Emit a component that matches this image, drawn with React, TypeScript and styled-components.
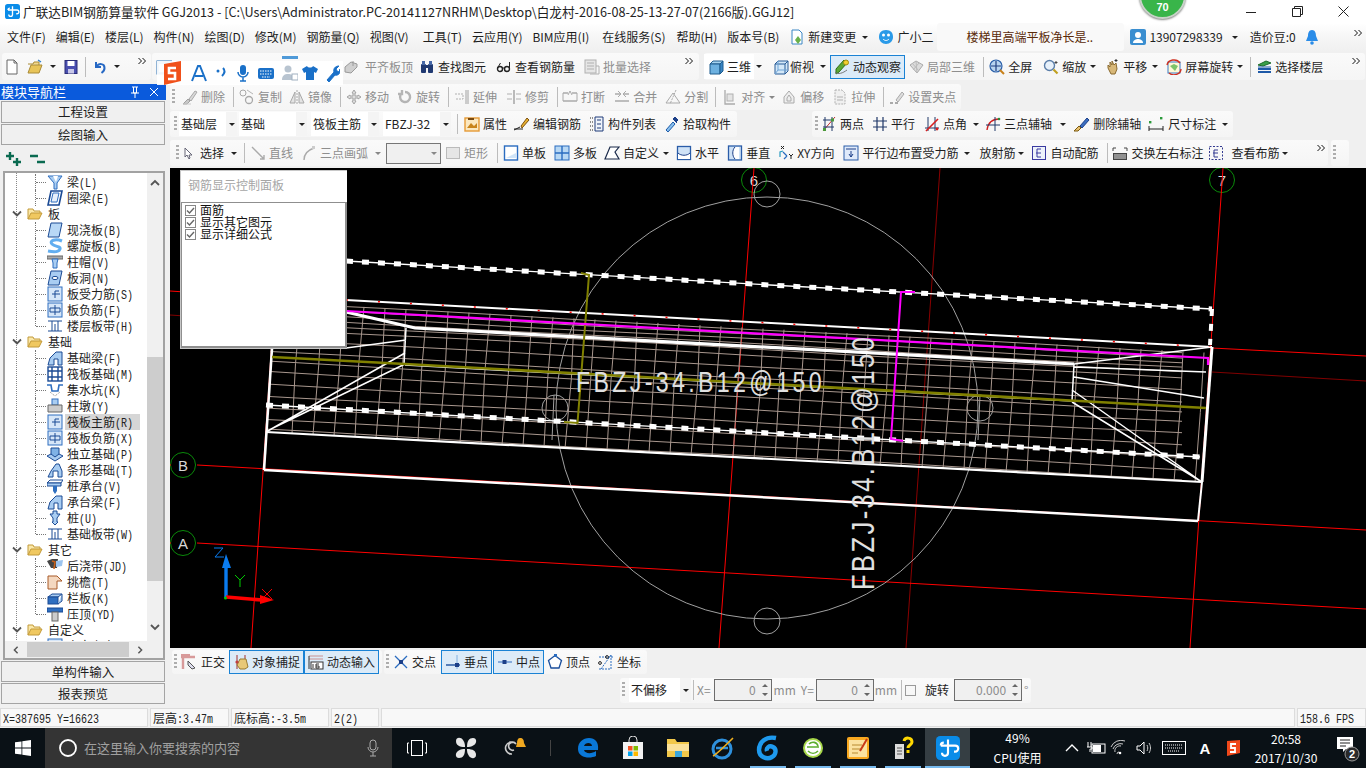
import React from "react";
import styled, { createGlobalStyle } from "styled-components";

const CJK = '"Noto Sans CJK SC","Liberation Sans",sans-serif';

const Global = createGlobalStyle`
  html, body { margin: 0; padding: 0; background: #f0f0f0; overflow: hidden; }
  * { box-sizing: border-box; }
  body { font: 12px/16px ${CJK}; color: #1e1e1e; }
`;

const Frame = styled.div`width:1366px;height:768px;position:relative;overflow:hidden;display:flex;flex-direction:column;background:#f0f0f0;`;
const TitleBar = styled.div`height:23px;background:#fff;display:flex;align-items:center;padding-left:5px;flex:none;`;
const TitleText = styled.div`margin-left:3px;font-size:12.65px;white-space:nowrap;color:#222;`;
const WinBtns = styled.div`margin-left:auto;display:flex;width:138px;height:23px;flex:none;`;
const WinBtn = styled.div`width:46px;display:flex;align-items:center;justify-content:center;`;
const MenuBar = styled.div`height:28px;flex:none;background:linear-gradient(#fff,#f6f6f6 50%,#f0f0f0);display:flex;align-items:center;padding-left:7px;gap:10px;position:relative;`;
const MenuItem = styled.span<{$m?:number}>`flex:none;white-space:nowrap;margin-left:${p=>p.$m??0}px;`;
const Msg = styled.div`width:187px;height:28px;flex:none;margin-left:-6px;background:#f9f9f9;border-radius:3px;color:#5a2a08;padding-left:29px;line-height:28px;white-space:nowrap;`;
const Brand = styled.div<{$m?:number}>`display:flex;align-items:center;gap:3px;flex:none;white-space:nowrap;margin-left:${p=>p.$m??0}px;`;
const TopRow = styled.div`height:33px;flex:none;display:flex;padding-top:2px;align-items:flex-start;`;
const Band = styled.div<{$m?:number;$p?:number;$h?:number}>`display:flex;align-items:center;height:${p=>p.$h?`${p.$h}px`:'auto'};margin-left:${p=>p.$m??0}px;padding-right:${p=>p.$p??5}px;background:linear-gradient(#fafafa,#f5f5f5);border-radius:3px;`;
const Item = styled.div<{$m:number;$on?:boolean;$white?:boolean}>`
  display:flex;align-items:center;flex:none;margin-left:${p=>p.$m}px;white-space:nowrap;
  ${p=>p.$on?'background:#dcebf8;border:1px solid #1a82d4;height:24px;padding:0 3px;':''}
  ${p=>p.$white?'background:#fff;height:25px;padding:0 3px 0 4px;':''}
`;
const IconBox = styled.svg`width:16px;height:16px;flex:none;display:block;`;
const Label = styled.span<{$off?:boolean;$g:number}>`margin-left:${p=>p.$g}px;color:${p=>p.$off?'#8e8e8e':'#1e1e1e'};flex:none;`;
const Caret = styled.i<{$m?:number;$off?:boolean}>`display:block;flex:none;width:0;height:0;margin-left:${p=>p.$m??4}px;border:3px solid transparent;border-bottom:0;border-top:3px solid ${p=>p.$off?'#888':'#222'};`;
const Sep = styled.div<{$m?:number}>`width:1px;height:20px;flex:none;background:#bcbcbc;margin-left:${p=>p.$m??8}px;`;
const Handle = styled.div<{$m?:number}>`width:3px;height:16px;flex:none;margin-left:${p=>p.$m??2}px;background:repeating-linear-gradient(#adadad 0 2px,transparent 2px 4px);`;
const More = styled.svg<{$m?:number}>`width:8px;height:8px;flex:none;margin-left:${p=>p.$m??0}px;align-self:flex-start;margin-top:4px;`;
const Peek = styled.div<{$m:number}>`width:16px;height:3px;flex:none;margin-left:${p=>p.$m}px;align-self:flex-start;margin-top:3px;background:#4f9ad8;`;
const Work = styled.div`flex:none;height:620px;display:flex;`;
const Side = styled.div`width:166px;flex:none;display:flex;flex-direction:column;`;
const SideHead = styled.div`height:16px;flex:none;background:#0a5adc;color:#fff;display:flex;align-items:center;padding:0 5px 0 1px;font-size:13px;justify-content:space-between;`;
const SideBtn = styled.div<{$h:number}>`height:${p=>p.$h}px;margin:1px 1px 0 1px;border:1px solid #a4a4a4;background:#f0f0f0;text-align:center;font-size:12.5px;line-height:${p=>p.$h-2}px;flex:none;`;
const PlusBar = styled.div`height:25px;flex:none;margin:1px 1px 0 3px;display:flex;align-items:center;padding-left:2px;gap:7px;`;
const TreeBox = styled.div`flex:1;min-height:0;margin:0 1px 0 3px;border:2px solid #a2a2a2;display:grid;grid-template-columns:142px 16px;grid-template-rows:1fr 17px;background:#f0f0f0;`;
const TreeList = styled.div`overflow:hidden;background:#fff;padding-top:1px;background-image:repeating-linear-gradient(#888 0 1px,transparent 1px 2px);background-size:1px 100%;background-position:11px 0;background-repeat:no-repeat;`;
const Row = styled.div<{$last?:boolean}>`height:16px;position:relative;display:flex;align-items:center;white-space:nowrap;padding-left:42px;
  &::before{content:"";position:absolute;left:30px;top:0;height:${p=>p.$last?'8px':'16px'};border-left:1px dotted #777;}
  &::after{content:"";position:absolute;left:31px;top:8px;width:10px;border-top:1px dotted #777;}
`;
const RootRow = styled.div`height:16px;display:flex;align-items:center;white-space:nowrap;padding-left:7px;`;
const RootLabel = styled.span`margin-left:5px;`;
const LeafLabel = styled.span<{$sel?:boolean}>`padding:0 2px;margin-left:2px;height:16px;line-height:16px;font-size:12px;flex:none;background:${p=>p.$sel?'#d6d6d6':'transparent'};width:${p=>p.$sel?'75px':'auto'};`;
const Mono = styled.span`display:inline-block;font:10px/16px "Liberation Mono",monospace;transform:scaleY(1.2);color:#222;`;
const VBar = styled.div`background:#f0f0f0;display:flex;flex-direction:column;align-items:center;padding-top:6px;`;
const VThumb = styled.div`width:16px;height:224px;margin-top:170px;background:#cdcdcd;flex:none;`;
const ArrowSvg = styled.svg<{$mt?:number}>`width:10px;height:8px;flex:none;margin-top:${p=>p.$mt??0}px;`;
const HBar = styled.div`background:#f0f0f0;display:flex;align-items:center;padding-left:6px;`;
const HThumb = styled.div`width:102px;height:15px;margin-left:6px;background:#cdcdcd;flex:none;`;
const Corner = styled.div`background:#f0f0f0;`;
const Main = styled.div`flex:1;margin-left:4px;display:flex;flex-direction:column;min-width:0;`;
const ToolRow = styled.div<{$h:number;$t?:number;$a?:string}>`height:${p=>p.$h}px;flex:none;margin-top:${p=>p.$t??0}px;display:flex;align-items:${p=>p.$a??'stretch'};`;
const Combo = styled.div<{$m:number;$w:number}>`width:${p=>p.$w}px;height:24px;margin-left:${p=>p.$m}px;flex:none;display:flex;align-items:stretch;white-space:nowrap;`;
const ComboText = styled.div`flex:1;background:#fff;padding-left:2px;line-height:24px;`;
const ComboBtn = styled.div`width:11px;flex:none;background:#f4f4f4;display:flex;align-items:center;justify-content:center;`;
const BlankBox = styled.div<{$m:number;$w:number}>`width:${p=>p.$w}px;height:21px;margin-left:${p=>p.$m}px;flex:none;border:1px solid #777;background:#f0f0f0;display:flex;align-items:center;justify-content:flex-end;padding-right:3px;`;
const CanvasWrap = styled.div`height:480px;flex:none;position:relative;background:#000;overflow:hidden;`;
const CanvasSvg = styled.svg`width:1196px;height:480px;display:block;`;
const Panel = styled.div`position:absolute;left:10px;top:2px;width:167px;height:179px;background:#fff;border:1px solid #c8c8c8;border-right:0;display:flex;flex-direction:column;`;
const PanelTitle = styled.div`height:31px;flex:none;color:#a6a6a6;padding-left:7px;line-height:28px;`;
const PanelBody = styled.div`flex:1;border:2px solid #8f8f8f;border-width:1px 2px 2px 1px;padding:1px 0 0 3px;`;
const PanelRow = styled.div`height:12px;display:flex;align-items:center;line-height:12px;font-size:12px;gap:4px;color:#111;`;
const Check = styled.svg`width:11px;height:11px;flex:none;`;
const Unit = styled.span<{$m?:number}>`margin-left:${p=>p.$m??2}px;color:#8c8c8c;flex:none;`;
const NumBox = styled.div<{$m?:number;$w:number}>`width:${p=>p.$w}px;height:22px;margin-left:${p=>p.$m??2}px;flex:none;border:1px solid #6c6c6c;background:#f0f0f0;color:#8c8c8c;display:flex;align-items:center;justify-content:flex-end;gap:5px;padding-right:2px;`;
const Spin = styled.svg`width:8px;height:16px;flex:none;`;
const Tick = styled.div<{$m:number}>`width:11px;height:11px;margin-left:${p=>p.$m}px;border:1px solid #9a9a9a;flex:none;`;
const StatusBar = styled.div`height:24px;flex:none;display:flex;gap:2px;padding:4px 0 0 0;`;
const Cell = styled.div<{$w:number}>`width:${p=>p.$w}px;flex:${p=>p.$w?'none':'1'};border:1px solid #dcdcdc;background:#f8f8f8;height:19px;padding-left:2px;line-height:17px;white-space:nowrap;`;
const Taskbar = styled.div`height:40px;flex:none;background:#0a1116;display:flex;align-items:center;color:#fff;`;
const StartBtn = styled.div`width:45px;height:40px;display:flex;align-items:center;justify-content:center;flex:none;`;
const Search = styled.div`width:347px;height:40px;background:#343434;display:flex;align-items:center;color:#a0a0a0;padding-left:13px;flex:none;font-size:13px;`;
const SearchText = styled.span`margin-left:6px;flex:1;`;
const Slot = styled.div<{$w?:number;$u?:boolean;$act?:boolean}>`width:${p=>p.$w??45}px;height:40px;flex:none;display:flex;align-items:center;justify-content:center;position:relative;background:${p=>p.$act?'#353e43':'transparent'};
  ${p=>p.$u?`&::after{content:"";position:absolute;left:${p.$act?0:5}px;right:${p.$act?0:4}px;bottom:0;height:2px;background:#76b9ed;}`:''}
`;
const TaskDiv = styled.div`width:1px;height:16px;background:#444;margin:0 14px 0 9px;flex:none;`;
const Cpu = styled.div`width:85px;flex:none;text-align:center;font-size:12px;line-height:20px;color:#fff;margin-left:5px;`;
const Tray = styled.div`display:flex;align-items:center;flex:none;`;
const TrayA = styled.span`width:26px;text-align:center;font:bold 15px "Liberation Sans",sans-serif;`;
const Clock = styled.div`width:84px;flex:none;text-align:center;font-size:12px;line-height:19px;margin-left:2px;`;
const Sogou = styled.div`position:absolute;left:157px;top:61px;width:186px;height:24px;background:rgba(255,255,255,.93);display:flex;align-items:center;padding-left:5px;`;
const SogouIcon = styled.svg<{$m:number}>`width:16px;height:18px;flex:none;margin-left:${p=>p.$m}px;`;
const Badge = styled.div`position:absolute;left:1139px;top:-28px;width:47px;height:47px;border-radius:50%;background:#39b54a;border:2px solid #c9d2c9;color:#fff;font:bold 11px "Liberation Sans",sans-serif;display:flex;align-items:flex-end;justify-content:center;padding-bottom:4px;box-shadow:0 1px 2px #888;`;

const Ic: Record<string, React.ReactNode> = {
  new: <path d="M3 1h7l3 3v11H3z M10 1v3h3" fill="#fff" stroke="#666"/>,
  open: <><path d="M1 5h5l1-2h5v3" fill="#f4d98a" stroke="#a98b38"/><path d="M1 14l3-8h11l-3 8z" fill="#e8c458" stroke="#a98b38"/><path d="M11 1l3 2" stroke="#2a7fd0" strokeWidth="1.4"/></>,
  save: <><rect x="2" y="1.500" width="12" height="13" fill="#4a4fb0" stroke="#2a2d77"/><rect x="4.500" y="2" width="7" height="5" fill="#fff"/><rect x="5" y="10" width="6" height="4.500" fill="#c8c8e8"/></>,
  undo: <path d="M4 3v5h5M4.500 8c2-4 8-4 8 1 0 2-1.500 4-3 5" fill="none" stroke="#2668c4" strokeWidth="2"/>,
  hidden: <><rect x="1" y="2" width="15" height="13" fill="#4f9ad8" stroke="#2a70b4"/><rect x="3" y="5" width="11" height="8" fill="#dcecf8"/></>,
  flat: <><path d="M2 8l6-5 6 2v3l-6 6-6-1z" fill="#cfcfcf" stroke="#9a9a9a"/><path d="M10 2v5" stroke="#9a9a9a"/></>,
  find: <><rect x="2" y="5" width="5" height="9" rx="1" fill="#213a72"/><rect x="9" y="5" width="5" height="9" rx="1" fill="#213a72"/><rect x="3" y="2" width="3" height="4" fill="#4668a8"/><rect x="10" y="2" width="3" height="4" fill="#4668a8"/><rect x="6" y="6" width="4" height="3" fill="#213a72"/></>,
  glasses: <><circle cx="4" cy="10" r="2.500" fill="none" stroke="#222" strokeWidth="1.400"/><circle cx="11" cy="10" r="2.500" fill="none" stroke="#222" strokeWidth="1.400"/><path d="M6.500 9h2M1.500 9l3-5M13.500 9V3" stroke="#222" fill="none"/></>,
  batch: <><rect x="1" y="1" width="11" height="13" fill="#e6e6e6" stroke="#b0b0b0"/><path d="M3 4h7M3 7h7M3 10h7" stroke="#b0b0b0"/><path d="M12 7h3v8H6" stroke="#b0b0b0" fill="none"/></>,
  cube: <><path d="M2 5l3-3h10l-3 3z" fill="#a6d4f0" stroke="#1f5c8e"/><path d="M2 5h10v10H2z" fill="#6db1e0" stroke="#1f5c8e"/><path d="M12 5l3-3v10l-3 3z" fill="#3a86c4" stroke="#1f5c8e"/></>,
  wire: <><path d="M2 5l3-3h10v10l-3 3H2z" fill="#d4e8f8" stroke="#275a96"/><path d="M2 5h10v10M12 5l3-3" fill="none" stroke="#275a96"/><path d="M5 2v9l-3 4M5 11h9" fill="none" stroke="#6ea5d8"/></>,
  orbit: <><path d="M2 15l3-2 8-9-3-3-8 9z" fill="#5da835" stroke="#2f6e14"/><circle cx="12" cy="3.500" r="2.500" fill="#f2d030" stroke="#a08a10"/><path d="M1 13c3 3 8 1 12-2" fill="none" stroke="#777"/></>,
  local: <><path d="M2 6l6-4 7 4-6 8z" fill="#dcdcdc" stroke="#aaa"/><path d="M8 2l1 12M4 4l7 8M11 4l-6 7" stroke="#bbb"/></>,
  full: <><circle cx="7" cy="7" r="6" fill="#b8d4f0" stroke="#2a5fa8" strokeWidth="1.200"/><path d="M7 2v10M2 7h10" stroke="#203f80" strokeWidth="1.200"/><path d="M11 11l4 4" stroke="#c8801a" strokeWidth="2"/></>,
  zoom: <><circle cx="6.500" cy="6.500" r="5" fill="#e6f0fa" stroke="#5a7da8" strokeWidth="1.400"/><path d="M10.500 10.500l4 4" stroke="#c0a020" strokeWidth="2.200"/><path d="M13 2v3M11.500 3.500h3" stroke="#444"/></>,
  pan: <><path d="M4 9V6l2 2V3l2 3V2l2 4 2-2 1 6-2 5H7z" fill="#d8b878" stroke="#8a6a30"/><path d="M12 0v3M10.500 1.500h3" stroke="#333"/></>,
  rotate: <><rect x="2" y="3" width="12" height="11" fill="#fff8d8" stroke="#3a7ac4"/><path d="M4 7l4-2 4 2-3 5z" fill="#7cc46a"/><path d="M1 6a7 6 0 0 1 13-2M15 10a7 6 0 0 1-12 4" fill="none" stroke="#d03020" strokeWidth="1.400"/></>,
  floors: <><path d="M2 6l8-4 5 2-8 3z" fill="#3aa04a" stroke="#1e6a2a"/><path d="M2 10h13M2 13h13" stroke="#1f5aa8" strokeWidth="1.800"/><path d="M2 8h13" stroke="#1f5aa8"/></>,
  del: <><path d="M1 15l5-5 2 2-3 3z" fill="#c8c8c8" stroke="#a0a0a0"/><path d="M7 10l6-8 2 1-6 9z" fill="#d8d8d8" stroke="#a8a8a8"/><path d="M1 15h8" stroke="#ccc"/></>,
  copy: <><circle cx="4" cy="4" r="3" fill="none" stroke="#a8a8a8"/><circle cx="10" cy="11" r="3.500" fill="none" stroke="#a8a8a8" strokeWidth="1.300"/><path d="M8 1l6 4" stroke="#b4b4b4"/></>,
  mirror: <><path d="M1 14l5-11v11zM15 14l-5-11v11z" fill="#e4e4e4" stroke="#a8a8a8"/><path d="M8 1v14" stroke="#a8a8a8" strokeDasharray="2 1"/></>,
  move: <path d="M8 1l2 3H9v3h3V6l3 2-3 2V9H9v3h1l-2 3-2-3h1V9H4v1L1 8l3-2v1h3V4H6z" fill="#dedede" stroke="#a4a4a4"/>,
  rot: <path d="M8 3a5 5 0 1 1-4.500 3M5 1v4H1" fill="none" stroke="#b4b4b4" strokeWidth="2.400"/>,
  extend: <><path d="M1 5h8v5H1" fill="none" stroke="#b0b0b0" strokeDasharray="2 1"/><path d="M12 1v14M14 1v14" stroke="#a0a0a0"/></>,
  trim: <><path d="M1 5h5M10 5h5M1 10h5M10 10h5" stroke="#b0b0b0"/><path d="M8 1v14" stroke="#a0a0a0" strokeWidth="1.400"/></>,
  brk: <><path d="M1 4h5M10 4h5M1 12h14" stroke="#aaa" strokeWidth="1.300"/><path d="M1 4v8M15 4v8M8 2l-2 4M8 2l2 4" stroke="#aaa" fill="none"/></>,
  merge: <><path d="M1 5h5M10 5h5M1 12h14" stroke="#aaa" strokeWidth="1.300"/><path d="M4 2l3 3-3 3M12 2L9 5l3 3" stroke="#aaa" fill="none"/></>,
  split: <><path d="M1 14h14L8 4z" fill="none" stroke="#aaa"/><path d="M11 1L5 15" stroke="#aaa" strokeDasharray="2 1"/></>,
  align: <><path d="M3 1v14h10" stroke="#aaa" fill="none" strokeWidth="1.300"/><rect x="5" y="5" width="6" height="7" fill="#e4e4e4" stroke="#b0b0b0"/></>,
  offset: <path d="M3 14V8l5-6 5 6v6zM6 12V9l2-3 2 3v3z" fill="#eee" stroke="#aaa"/>,
  stretch: <><path d="M3 1h7l3 3v11H3z" fill="#f0f0f0" stroke="#b0b0b0" strokeDasharray="2 1"/><path d="M5 8h6M5 11h6" stroke="#b0b0b0"/></>,
  grip: <><path d="M7 11l6-8 2 2-6 8z" fill="#ddd" stroke="#aaa"/><path d="M1 14h3M6 14h3" stroke="#aaa" strokeWidth="2"/></>,
  attr: <><rect x="1" y="2" width="14" height="13" fill="#fbe8c0" stroke="#e59a36" strokeWidth="1.400"/><path d="M3 12l4-5 3 3 3-3v5z" fill="#c8841c"/><path d="M4 2h6v2H4z" fill="#7a4a10"/></>,
  edit: <><path d="M7 10l6-8 2 2-7 8z" fill="#e8b030" stroke="#7a5010"/><path d="M0 14l6-3M0 13h9" stroke="#222"/></>,
  list: <><path d="M6 1h8v14H6z" fill="#eef3fa" stroke="#1e3a78"/><path d="M8 4h4M8 8h4M8 12h4" stroke="#1e3a78"/><path d="M1 2h3M1 6h3M1 10h3M1 14h3" stroke="#222" strokeDasharray="1 1"/></>,
  pick: <><path d="M2 14l7-8 2 2-7 8z" fill="#8ac0ee" stroke="#1c5aa8"/><path d="M9 3l4 4M11 1l3 3-2 2-3-3z" fill="#1c3f88" stroke="#1c3f88"/></>,
  twop: <><path d="M2 15L14 1" stroke="#c03030"/><path d="M2 4h11M2 11h11M4 1v14M11 1v14" stroke="#203868"/><rect x="2" y="12" width="3" height="3" fill="#4a9a3a"/><rect x="10" y="2.500" width="3" height="3" fill="#4a9a3a"/></>,
  para: <path d="M1 5h14M1 11h14M5 1v14M11 1v14" stroke="#203868" strokeWidth="1.200"/>,
  angle: <><path d="M1 12h14M4 1v14M11 1v14" stroke="#203868"/><path d="M2 15L14 3" stroke="#d82020" strokeWidth="1.600"/><circle cx="13" cy="13" r="1.400" fill="#d82020"/></>,
  arc3: <><path d="M2 14C3 7 7 3 14 3" fill="none" stroke="#d02020" strokeWidth="1.400"/><path d="M10 1v14M1 9h14" stroke="#203868"/><circle cx="14" cy="3" r="1.300" fill="#2a8a3a"/></>,
  brush: <><path d="M0 15l5-5 2 2-3 3z" fill="#e8c070" stroke="#7a5a10"/><path d="M6 10l7-8 2 2-7 8z" fill="#3a6ec0" stroke="#1c3f88"/></>,
  dim: <><path d="M1 13h14M1 10v5M15 10v5" stroke="#222"/><rect x="1" y="5" width="2.400" height="2.400" fill="#2a9a3a"/><rect x="12" y="1" width="2.400" height="2.400" fill="#2a9a3a"/></>,
  arrow: <path d="M5 3v9l2-2 2 4 1-1-1-3h3z" fill="#fff" stroke="#667"/>,
  line: <path d="M2 2l12 12M10 14h4v-4" fill="none" stroke="#aaa" strokeWidth="1.400"/>,
  arcg: <><path d="M3 15c0-6 4-10 10-12" fill="none" stroke="#aaa" strokeWidth="1.400"/><rect x="11" y="1" width="3" height="3" fill="#ccc"/></>,
  rect: <rect x="1.500" y="2.500" width="13" height="11" fill="#e6e6e6" stroke="#bbb"/>,
  single: <><rect x="1.500" y="1" width="13" height="14" fill="#fff" stroke="#2a6cc0" strokeWidth="1.400"/><path d="M3 13h10V8z" fill="#d0e4f8"/></>,
  multi: <><rect x="1" y="1" width="14" height="14" fill="#b8d8f4" stroke="#2a6cc0"/><path d="M8 1v14M1 8h14" stroke="#2a6cc0" strokeWidth="1.400"/></>,
  custom: <path d="M6 2h9l-4 5 4 7H1z" fill="#fff" stroke="#1a2a4a" strokeWidth="1.200"/>,
  horiz: <><rect x="1.500" y="1.500" width="13" height="13" fill="#cfe2f6" stroke="#2a5ca8" strokeWidth="1.300"/><path d="M2 8c3 3 9 3 12 0v6H2z" fill="#fff"/><path d="M2 8c3 3 9 3 12 0" stroke="#1c3f88" fill="none"/></>,
  vert: <><rect x="1.500" y="1" width="13" height="14" fill="#cfe2f6" stroke="#2a5ca8" strokeWidth="1.300"/><path d="M8 2C5 5 5 11 8 14h4V2z" fill="#fff"/><path d="M8 2C5 5 5 11 8 14" stroke="#1c3f88" fill="none"/></>,
  xy: <><path d="M5 7l4 4M9 11l-3 3" stroke="#2a6cc0" strokeWidth="1.200" fill="none"/><path d="M2 12V7l3-1" stroke="#2a9ac0" fill="none" strokeWidth="1.200"/><path d="M3 1l3 3M6 1L3 4M11 9l2 2 2-2M13 11v3" stroke="#222" fill="none"/></>,
  paredge: <><rect x="1" y="1" width="14" height="14" fill="#dfeafa" stroke="#2a5ca8"/><path d="M3 4h10M8 6v6M6 9l2 3 2-3" stroke="#1c3f88" fill="none"/></>,
  auto: <><rect x="1.500" y="1.500" width="13" height="13" fill="#eef3fa" stroke="#3a3aa0"/><path d="M10 4H6v8h4M5 8h5" stroke="#3a3aa0" fill="none"/></>,
  swap: <><path d="M1 8h14v7H1z" fill="#444"/><path d="M3 9v5M5 9v5M7 9v5M9 9v5M11 9v5M13 9v5" stroke="#ddd"/><path d="M1 3h3M1 3v3M15 3h-3M15 3v3" stroke="#444" fill="none"/></>,
  viewb: <><rect x="1.500" y="1.500" width="13" height="13" fill="none" stroke="#333a90" strokeDasharray="2 1.500"/><path d="M10 5H6v7h4M5 8h5" stroke="#333a90" fill="none"/></>,
  ortho: <><path d="M1 3h14M3 3v12M1 1h9" stroke="#d89a9a" strokeWidth="2.400" fill="none"/><path d="M8 7l7 7-3 1-4-4z" fill="#dde" stroke="#555"/></>,
  obj: <><path d="M4 1v14M12 1v14" stroke="#a03030"/><path d="M4 11l3-6h6l2 8-3 2H7z" fill="#e8c878" stroke="#9a7a30"/><circle cx="4" cy="8" r="1.600" fill="#c04040"/></>,
  dyn: <><path d="M1 2h14M1 5h14" stroke="#c89090"/><rect x="3" y="8" width="12" height="7" fill="#fff" stroke="#333"/><path d="M1 2v13M5 10v4M8 10v4h3v-2h-3M11 10h-3" stroke="#333" fill="none"/></>,
  cross: <><path d="M2 2l12 12M14 2L2 14" stroke="#2a6cc0" strokeWidth="1.300"/><rect x="6" y="6" width="4" height="4" fill="#1c3f88"/></>,
  perp: <><path d="M1 11h14" stroke="#1c4f9c" strokeWidth="1.400"/><path d="M12 1v14" stroke="#80b0e0"/><rect x="10" y="9" width="4" height="4" fill="#1c3f88"/></>,
  mid: <><path d="M1 8h14" stroke="#6090d0" strokeWidth="1.400"/><rect x="5.500" y="6" width="4" height="4" fill="#1c3f88"/></>,
  vertex: <><path d="M8 1.500l6.500 5-2.500 7.500H4L1.500 6.500z" fill="#fff" stroke="#1c4f9c" strokeWidth="1.300"/><rect x="7" y="0" width="3" height="3" fill="#2a6cc0"/></>,
  coord: <><path d="M1 3h14M3 15L13 1M13 1v14H1" stroke="#2a6cc0" strokeDasharray="2 1" fill="none"/><circle cx="2" cy="9" r="1.400" fill="none" stroke="#222"/><circle cx="9" cy="3" r="1.400" fill="none" stroke="#222"/></>,
};

const Icon = ({ n }: { n: string }) => <IconBox viewBox="0 0 16 16">{Ic[n]}</IconBox>;

type TP = { ic?: string; t: string; m?: number; g?: number; off?: boolean; caret?: number; on?: boolean; white?: boolean };
const Tool = ({ ic, t, m = 8, g = 3, off, caret, on, white }: TP) => (
  <>
    <Item $m={m} $on={on} $white={white}>
      {ic && <Icon n={ic} />}
      <Label $off={off} $g={ic ? g : 0}>{t}</Label>
    </Item>
    {caret !== undefined && <Caret $m={caret} $off={off} />}
  </>
);

const Chev = ({ m }: { m?: number }) => (
  <More $m={m} viewBox="0 0 8 8"><path d="M0.500 1l3 3-3 3M4.500 1l3 3-3 3" fill="none" stroke="#111" /></More>
);

const Select = ({ m, w, t }: { m: number; w: number; t: string }) => (
  <Combo $m={m} $w={w}><ComboText>{t}</ComboText><ComboBtn><Caret $m={0} /></ComboBtn></Combo>
);

const C = { b: "#2f6fc0", d: "#1b4a94", l: "#a9cdf2", w: "#fff" };
const Tr: Record<string, React.ReactNode> = {
  beam: <><path d="M1 2h14L10 9v6H7V9z" fill={C.l} stroke={C.b}/><path d="M6 2l5 0-2 6z" fill={C.w}/></>,
  ring: <><path d="M4 1h11l-3 14H1z" fill={C.w} stroke={C.d} strokeWidth="1.600"/><path d="M6 3h6l-2 9H4z" fill="#e8f0fa" stroke={C.b}/></>,
  slab: <path d="M4 1h11l-3 14H1z" fill="#b8d8f6" stroke={C.d}/>,
  spiral: <path d="M15 3C8 0 2 3 5 6s9 2 8 5-7 3-12 2" fill="none" stroke="#62aef0" strokeWidth="3"/>,
  cap: <><rect x="0" y="2" width="16" height="3" fill="#aaa" stroke="#666"/><path d="M5 5h6l-1 4v5H6V9z" fill={C.l} stroke={C.b}/></>,
  hole: <><path d="M4 1h11l-3 14H1z" fill={C.l} stroke={C.d}/><ellipse cx="8" cy="8" rx="3" ry="1.600" fill="#fff" stroke={C.d}/></>,
  rebS: <><rect x="1" y="1" width="14" height="14" fill="#d6e6f8" stroke={C.b}/><path d="M12 5H8v7M5 8h8" stroke={C.d} fill="none"/></>,
  rebN: <><rect x="1" y="1" width="14" height="14" fill="#d6e6f8" stroke={C.b}/><path d="M3 6h10v4H3zM8 3v10" stroke={C.d} fill="none"/></>,
  band: <path d="M1 3h14M1 13h14M5 3v10M11 3v10M8 6v7" stroke={C.d} fill="none"/>,
  fbeam: <><path d="M1 15l2-7 6-6h6v13h-4V9H7v6z" fill={C.l} stroke={C.d}/></>,
  raft: <><rect x="1" y="1" width="14" height="14" fill="#fff" stroke={C.d} strokeWidth="1.400"/><path d="M5 1v14M11 1v14M1 5h14M1 11h14" stroke={C.d} strokeWidth="1.400"/></>,
  pit: <><path d="M0 3h4l1 6h6l1-6h4" fill="none" stroke={C.b} strokeWidth="1.600"/><path d="M3 10l5 4 5-4" stroke="#888" fill="none" strokeDasharray="1 1"/></>,
  pier: <><rect x="5" y="1" width="6" height="6" fill={C.l} stroke={C.b}/><path d="M1 7h14v7H1z" fill="#ccc" stroke="#666"/></>,
  iso: <><path d="M0 10l8-4 8 4-8 5z" fill={C.l} stroke={C.d}/><path d="M4 8V2h8v6l-4 3z" fill="#7fb2e6" stroke={C.d}/></>,
  strip: <path d="M1 15l3-6 5-7h3l3 7v6h-4V9H6v6z" fill={C.l} stroke={C.d}/>,
  pcap: <><path d="M0 5l3-3h13l-2 3z" fill={C.w} stroke={C.d}/><path d="M0 5h14v3H0z" fill={C.l} stroke={C.d}/><path d="M6 8h4v5l-2 3-2-3z" fill={C.b}/></>,
  pile: <path d="M6 1h4v3h3l-3 4v4h1l-3 3-3-3h1V8L3 4h3z" fill={C.l} stroke={C.d}/>,
  post: <><path d="M0 3l5-2h6l-1 9H4z" fill="#444"/><path d="M9 3l7-1-1 6-6 1z" fill="#9cc4ee"/><path d="M5 3l3 1-1 7" stroke="#c8601a" strokeWidth="1.600" fill="none"/></>,
  eave: <path d="M1 2h9l5 5h-5v8H1z" fill="#f4d8c0" stroke="#a85a28"/>,
  rail: <><path d="M1 7l4-3h10l-4 3z" fill={C.l} stroke={C.d}/><rect x="1" y="7" width="10" height="7" fill={C.b} stroke={C.d}/><path d="M11 14l4-3V4" fill={C.l} stroke={C.d}/></>,
  coping: <><rect x="0" y="2" width="16" height="4" fill={C.b} stroke={C.d}/><rect x="5" y="6" width="6" height="9" fill="#ccc" stroke="#666"/></>,
};
const TIcon = ({ n }: { n: string }) => <IconBox viewBox="0 0 16 16">{Tr[n]}</IconBox>;

const Folder = () => (
  <IconBox viewBox="0 0 16 16">
    <path d="M1 13V3h5l1 2h6v2" fill="#fbe8a8" stroke="#c29a3a" />
    <path d="M1 13l3-6h11l-3 6z" fill="#f0c860" stroke="#c29a3a" />
  </IconBox>
);
const ExpSvg = styled.svg`flex:none;margin-right:5px;width:10px;height:8px;`;
const Exp = () => <ExpSvg viewBox="0 0 10 8"><path d="M1 1.500l4 4 4-4" fill="none" stroke="#555" strokeWidth="1.800" /></ExpSvg>;

type L = [string, string, string, string?];
const tree: (L | string)[] = [
  ["beam", "梁", "(L)"], ["ring", "圈梁", "(E)"], "板",
  ["slab", "现浇板", "(B)"], ["spiral", "螺旋板", "(B)"], ["cap", "柱帽", "(V)"], ["hole", "板洞", "(N)"], ["rebS", "板受力筋", "(S)"], ["rebN", "板负筋", "(F)"], ["band", "楼层板带", "(H)", "l"], "基础",
  ["fbeam", "基础梁", "(F)"], ["raft", "筏板基础", "(M)"], ["pit", "集水坑", "(K)"], ["pier", "柱墩", "(Y)"], ["rebS", "筏板主筋", "(R)", "s"], ["rebN", "筏板负筋", "(X)"], ["iso", "独立基础", "(P)"], ["strip", "条形基础", "(T)"], ["pcap", "桩承台", "(V)"], ["fbeam", "承台梁", "(F)"], ["pile", "桩", "(U)"], ["band", "基础板带", "(W)", "l"], "其它",
  ["post", "后浇带", "(JD)"], ["eave", "挑檐", "(T)"], ["rail", "栏板", "(K)"], ["coping", "压顶", "(YD)", "l"], "自定义",
  ["rebN", "自定义点", "(D)"],
];

const menus: [string, number?][] = [["文件(F)"], ["编辑(E)"], ["楼层(L)"], ["构件(N)"], ["绘图(D)"], ["修改(M)"], ["钢筋量(Q)"], ["视图(V)"], ["工具(T)", 4], ["云应用(Y)"], ["BIM应用(I)"], ["在线服务(S)", 3], ["帮助(H)", 1], ["版本号(B)"]];

const L2 = (x1: number, y1: number, x2: number, y2: number, x: number) => y1 + ((y2 - y1) * (x - x1)) / (x2 - x1);
const meshPath = () => {
  let d = "";
  const top = (x: number) => L2(346, 300, 1212, 347, x);
  const offs = [7, 12, 17, 22, 27, 33, 44, 56, 66, 76, 88, 100, 112, 124, 134];
  offs.forEach((o, r) => {
    d += "M";
    for (let x = 262; x <= 1215; x += 40) {
      const wob = Math.sin(x / 90 + r) * 0.7;
      d += `${x},${(top(x) + o + wob).toFixed(1)} `;
    }
  });
  for (let x = 300; x <= 1215; x += 21) {
    const yt = top(x) + 6;
    const yb = top(x) + 136;
    d += `M${x + 1},${yt.toFixed(1)} ${x - 3 + Math.sin(x) * 1.5},${(yt + 60).toFixed(1)} ${x - 8},${yb.toFixed(1)} `;
  }
  return d;
};
const MESH = meshPath();

const Dotted = ({ pts }: { pts: string }) => (
  <>
    <polyline points={pts} fill="none" stroke="#fff" strokeWidth="1.300" />
    <polyline points={pts} fill="none" stroke="#fff" strokeWidth="5" strokeDasharray="7 9" />
  </>
);

const GridHead = ({ x, y, t }: { x: number; y: number; t: string }) => (
  <>
    <circle cx={x} cy={y} r="12.500" fill="none" stroke="#0a8a0a" />
    <text x={x} y={y + 6} textAnchor="middle" fill="#d8d8d8" fontFamily="Liberation Sans" fontSize="15">{t}</text>
  </>
);

const CadLabel = styled.text`font-family:"Liberation Sans",sans-serif;fill:#e0e0e0;font-weight:normal;`;

const Scene = () => (
  <CanvasSvg viewBox="170 168 1196 480">
    <defs>
      <clipPath id="m"><polygon points="271,346 346,300 1212,347 1202,482 266,432" /></clipPath>
    </defs>
    <GridHead x={754} y={180} t="6" />
    <GridHead x={1222} y={180} t="7" />
    <GridHead x={183} y={465} t="B" />
    <GridHead x={183} y={543} t="A" />
    <g stroke="#f00" fill="none">
      <path d="M272,340 L251,648" />
      <path d="M754,168 L719,648" />
      <path d="M1223,168 L1190,648" />
      <path d="M940,168 L906,648" stroke="#8a0000" />
      <path d="M197,465 L1366,530" />
      <path d="M197,543 L1366,609" />
      <path d="M170,465 L171,465 M170,543 L171,543 M170,291 L185,292 M1212,348 L1366,356" />
      <path d="M170,315 L185,316 M1212,372 L1366,381" stroke="#800000" />
    </g>
    <g fill="none" stroke="#a0a0a0">
      <circle cx="767" cy="408" r="211" />
      <circle cx="767" cy="194" r="13" />
      <circle cx="767" cy="621" r="13" />
      <circle cx="555" cy="408" r="13" />
      <circle cx="980" cy="408" r="13" />
      <path d="M554,395 L552,440 M980,395 L978,440" />
    </g>
    <path d={MESH} fill="none" stroke="#a8978e" strokeWidth="1" clipPath="url(#m)" />
    <g fill="none" stroke="#fff">
      <path d="M346,300 L1212,347" strokeWidth="2" />
      <path d="M346,300 L1212,347" strokeWidth="1.500" stroke="#f00" strokeDasharray="2 30" />
      <path d="M346,312 L415,328 L1074,364" strokeWidth="3.200" />
      <path d="M1074,364 L1212,347" strokeWidth="1.600" />
      <path d="M346,348 L406,340 M406,328 L404,364" strokeWidth="1.500" />
      <path d="M266,432 L405,353 M273,428 L405,364" strokeWidth="1.500" />
      <path d="M405,365 L1072,401" strokeWidth="1.600" />
      <path d="M1074,364 L1072,401 M1074,377 L1204,398 M1074,367 L1206,372" strokeWidth="1.500" />
      <path d="M1072,390 L1202,482 M1072,402 L1202,482" strokeWidth="1.500" />
      <path d="M266,432 L1202,482" strokeWidth="2.200" />
      <path d="M264,470 L1198,521" strokeWidth="2.400" />
      <path d="M272,348 L264,470" strokeWidth="2.600" />
      <path d="M1212,347 L1202,482" strokeWidth="3" />
      <path d="M1202,482 L1198,521" strokeWidth="2" />
    </g>
    <Dotted pts="346,261 770,285 1212,309" />
    <Dotted pts="266,405 770,433 1200,457" />
    <path d="M1212,309 L1210,345" stroke="#fff" strokeWidth="4" strokeDasharray="7 8" />
    <g fill="none" stroke="#808000" strokeWidth="2.600">
      <path d="M272,357 L405,364 L1206,408" />
      <path d="M581,273 L589,275 L577.500,423 L564,422" strokeWidth="2" />
    </g>
    <path d="M346,311 L1208,358 L1208,365" fill="none" stroke="#f0f" strokeWidth="2.200" />
    <path d="M915,292 L901,292 L891,439 L903,441" fill="none" stroke="#f0f" strokeWidth="2" />
    <CadLabel transform="translate(576 392) scale(.8 1)" fontSize="29" textLength="307" lengthAdjust="spacing">FBZJ-34.B12@150</CadLabel>
    <CadLabel transform="translate(874 590) rotate(-90) scale(.8 1)" fontSize="32" textLength="316" lengthAdjust="spacing">FBZJ-34.B12@150</CadLabel>
    <path d="M226,598 L226,566" stroke="#0a7cf0" strokeWidth="3.400" />
    <path d="M222,568 L226,554 L231,568z" fill="#0a7cf0" />
    <path d="M226,597 L262,600" stroke="#f00" strokeWidth="3.600" />
    <path d="M260,595 L274,600 L260,604z" fill="#f00" />
    <path d="M214,548h9l-8,9h9" fill="none" stroke="#0a7cf0" />
    <path d="M235,575l5,5 5,-5M240,580v7" fill="none" stroke="#0c0" />
    <path d="M262,589l10,10M272,589l-10,10" fill="none" stroke="#e00" />
    <circle cx="225.500" cy="598" r="1.500" fill="#0c0" />
  </CanvasSvg>
);

const Chk = () => (
  <Check viewBox="0 0 11 11"><rect x=".5" y=".5" width="10" height="10" fill="#fff" stroke="#888" /><path d="M2 5.500l2.500 2.500 4.500-5" fill="none" stroke="#666" strokeWidth="1.400" /></Check>
);

const Logo = ({ s }: { s: number }) => (
  <svg width={s} height={s} viewBox="0 0 20 20">
    <rect width="20" height="20" rx="3.500" fill="#0a8ce8" />
    <path d="M4 8h12M4 8a2.500 2.500 0 0 1 2.500-2.500M16 8a2.500 2.500 0 0 1 0 5h-1M10 3v11a2.500 2.500 0 0 1-5 0" fill="none" stroke="#fff" strokeWidth="1.800" />
  </svg>
);

const Spinner = () => (
  <Spin viewBox="0 0 8 16"><path d="M1 5l3-3 3 3zM1 11l3 3 3-3z" fill="#666" /></Spin>
);

const Win = () => (
  <svg width="16" height="16" viewBox="0 0 16 16"><path d="M0 2.300l6.500-.9v6.200H0zM7.300 1.300L16 0v7.600H7.300zM0 8.400h6.500v6.200L0 13.700zM7.300 8.400H16V16l-8.700-1.200z" fill="#fff" /></svg>
);

const MicSvg = styled.svg`margin-right:13px;flex:none;width:12px;height:18px;`;
const KbSvg = styled.svg`margin-left:6px;width:30px;height:14px;flex:none;`;
const SoSvg = styled.svg`margin-left:6px;width:18px;height:18px;flex:none;`;
const CloseArrow = styled(ArrowSvg)`margin-left:6px;`;
const BellSvg = styled(IconBox)`margin-left:-2px;`;
const SoLogo = styled.svg`flex:none;width:20px;height:26px;`;
const MenuMore = styled.svg`width:8px;height:8px;flex:none;margin-left:24px;align-self:flex-start;margin-top:6px;`;

export default function App() {
  return (
    <Frame>
      <Global />
      <TitleBar>
        <Logo s={15} />
        <TitleText>广联达BIM钢筋算量软件 GGJ2013 - [C:\Users\Administrator.PC-20141127NRHM\Desktop\白龙村-2016-08-25-13-27-07(2166版).GGJ12]</TitleText>
        <WinBtns>
          <WinBtn><svg width="10" height="10"><path d="M0 5.500h10" stroke="#222" /></svg></WinBtn>
          <WinBtn><svg width="11" height="11"><path d="M.5 2.500h8v8h-8zM2.500 2.500v-2h8v8h-2" fill="none" stroke="#222" /></svg></WinBtn>
          <WinBtn><svg width="11" height="11"><path d="M.5.5l10 10M10.500.5l-10 10" stroke="#222" /></svg></WinBtn>
        </WinBtns>
      </TitleBar>

      <MenuBar>
        {menus.map(([m, e]) => <MenuItem key={m} $m={e}>{m}</MenuItem>)}
        <Brand>
          <IconBox viewBox="0 0 16 16"><path d="M3 1h7l3 3v11H3z" fill="#fff" stroke="#3a86c4" /><path d="M9 7l3 4-3 4-3-4z" fill="#6ab04a" /></IconBox>
          <span>新建变更</span>
        </Brand>
        <Caret $m={-4} />
        <Brand>
          <IconBox viewBox="0 0 16 16"><path d="M8 1c5 0 7 3 7 7s-3 7-7 7-7-3-7-7 2-7 7-7z" fill="#2a9ae8" /><circle cx="5.500" cy="6" r="1.500" fill="#fff" /><circle cx="10.500" cy="6" r="1.500" fill="#fff" /><path d="M5 10c2 2 4 2 6 0" stroke="#fff" fill="none" /></IconBox>
          <span>广小二</span>
        </Brand>
        <Msg>楼梯里高端平板净长是..</Msg>
        <Brand $m={-4}>
          <IconBox viewBox="0 0 16 16"><rect width="16" height="16" rx="2" fill="#3a8ed0" /><circle cx="8" cy="6" r="3" fill="#fff" /><path d="M3 14c0-3 3-4 5-4s5 1 5 4z" fill="#fff" /></IconBox>
          <span>13907298339</span>
        </Brand>
        <Caret $m={-1} />
        <MenuItem $m={2}>造价豆:0</MenuItem>
        <BellSvg viewBox="0 0 16 16"><path d="M8 1c3 0 4 3 4 6l2 5H2l2-5c0-3 1-6 4-6z" fill="#2a8ce8" /><circle cx="8" cy="14" r="1.800" fill="#2a8ce8" /></BellSvg>
        <MenuMore viewBox="0 0 8 8"><path d="M0.500 1l3 3-3 3M4.500 1l3 3-3 3" fill="none" stroke="#111" /></MenuMore>
      </MenuBar>

      <TopRow>
        <Band $m={2} $p={5} $h={27}>
          <Item $m={2}><Icon n="new" /></Item>
          <Item $m={7}><Icon n="open" /></Item>
          <Caret $m={7} />
          <Item $m={7}><Icon n="save" /></Item>
          <Sep $m={6} />
          <Item $m={6}><Icon n="undo" /></Item>
          <Caret $m={6} />
          <Chev m={18} />
        </Band>
        <Band $m={1} $p={6} $h={27}>
          <Item $m={4}><Icon n="hidden" /></Item>
          <Peek $m={110} />
          <Tool ic="flat" t="平齐板顶" m={45} g={6} off />
          <Tool ic="find" t="查找图元" m={6} />
          <Tool ic="glasses" t="查看钢筋量" m={10} />
          <Tool ic="batch" t="批量选择" m={9} off />
          <Chev m={34} />
        </Band>
        <Band $m={5} $p={5} $h={27}>
          <Tool ic="cube" t="三维" white m={0} g={3} caret={2} />
          <Tool ic="wire" t="俯视" m={11} g={1} caret={6} />
          <Tool ic="orbit" t="动态观察" m={4} on />
          <Tool ic="local" t="局部三维" m={3} off />
          <Sep />
          <Tool ic="full" t="全屏" m={5} />
          <Tool ic="zoom" t="缩放" m={11} caret={4} />
          <Tool ic="pan" t="平移" m={8} caret={5} />
          <Tool ic="rotate" t="屏幕旋转" m={8} caret={4} />
          <Sep $m={7} />
          <Tool ic="floors" t="选择楼层" m={5} />
          <Chev m={29} />
        </Band>
      </TopRow>

      <Work>
        <Side>
          <SideHead>
            <span>模块导航栏</span>
            <svg width="32" height="12" viewBox="0 0 32 12"><path d="M3 1h6M4.500 1v6h3V1M2 7h8M6 7v5" stroke="#fff" fill="none" /><path d="M21 2l8 8M29 2l-8 8" stroke="#fff" /></svg>
          </SideHead>
          <SideBtn $h={22}>工程设置</SideBtn>
          <SideBtn $h={21}>绘图输入</SideBtn>
          <PlusBar>
            <svg width="17" height="16" viewBox="0 0 17 16"><path d="M5 1v8M1 5h8M12 7v8M8 11h8" stroke="#0a6a50" strokeWidth="2.400" /></svg>
            <svg width="17" height="16" viewBox="0 0 17 16"><path d="M1 5h8M8 11h8" stroke="#0a6a50" strokeWidth="2.400" /></svg>
          </PlusBar>
          <TreeBox>
            <TreeList>
              {tree.map((r, i) =>
                typeof r === "string" ? (
                  <RootRow key={i}><Exp /><Folder /><RootLabel>{r}</RootLabel></RootRow>
                ) : (
                  <Row key={i} $last={r[3] === "l"}>
                    <TIcon n={r[0]} />
                    <LeafLabel $sel={r[3] === "s"}>{r[1]}<Mono>{r[2]}</Mono></LeafLabel>
                  </Row>
                )
              )}
            </TreeList>
            <VBar>
              <ArrowSvg viewBox="0 0 10 8"><path d="M1 6l4-4 4 4" fill="none" stroke="#555" strokeWidth="1.800" /></ArrowSvg>
              <VThumb />
              <ArrowSvg $mt={42} viewBox="0 0 10 8"><path d="M1 2l4 4 4-4" fill="none" stroke="#555" strokeWidth="1.800" /></ArrowSvg>
            </VBar>
            <HBar>
              <ArrowSvg viewBox="0 0 8 10"><path d="M6 1L2 5l4 4" fill="none" stroke="#555" strokeWidth="1.800" /></ArrowSvg>
              <HThumb />
              <CloseArrow viewBox="0 0 8 10"><path d="M2 1l4 4-4 4" fill="none" stroke="#555" strokeWidth="1.800" /></CloseArrow>
            </HBar>
            <Corner />
          </TreeBox>
          <SideBtn $h={21}>单构件输入</SideBtn>
          <SideBtn $h={21}>报表预览</SideBtn>
        </Side>

        <Main>
          <ToolRow $h={26}>
            <Band $p={5}>
              <Handle />
              <Tool ic="del" t="删除" m={7} off />
              <Sep />
              <Tool ic="copy" t="复制" m={5} off />
              <Tool ic="mirror" t="镜像" m={7} off />
              <Sep />
              <Tool ic="move" t="移动" m={5} off />
              <Tool ic="rot" t="旋转" off />
              <Sep />
              <Tool ic="extend" t="延伸" m={5} off />
              <Tool ic="trim" t="修剪" m={9} off />
              <Sep />
              <Tool ic="brk" t="打断" m={4} off />
              <Tool ic="merge" t="合并" m={9} off />
              <Tool ic="split" t="分割" off />
              <Sep $m={7} />
              <Tool ic="align" t="对齐" m={6} off caret={4} />
              <Tool ic="offset" t="偏移" m={6} off />
              <Tool ic="stretch" t="拉伸" off />
              <Sep />
              <Tool ic="grip" t="设置夹点" m={5} off />
            </Band>
          </ToolRow>
          <ToolRow $h={29} $t={1} $a="flex-start">
            <Band $p={6} $h={26}>
              <Handle $m={4} />
              <Select m={2} w={58} t="基础层" />
              <Select m={2} w={68} t="基础" />
              <Select m={4} w={68} t="筏板主筋" />
              <Select m={4} w={68} t="FBZJ-32" />
              <Sep $m={6} />
              <Tool ic="attr" t="属性" m={6} />
              <Tool ic="edit" t="编辑钢筋" m={7} />
              <Tool ic="list" t="构件列表" />
              <Tool ic="pick" t="拾取构件" />
            </Band>
            <Band $m={75} $p={5} $h={26}>
              <Handle $m={3} />
              <Tool ic="twop" t="两点" m={3} />
              <Tool ic="para" t="平行" />
              <Tool ic="angle" t="点角" m={9} caret={6} />
              <Tool ic="arc3" t="三点辅轴" m={6} caret={8} />
              <Tool ic="brush" t="删除辅轴" />
              <Tool ic="dim" t="尺寸标注" m={7} g={4} caret={6} />
            </Band>
          </ToolRow>
          <ToolRow $h={28} $a="flex-start">
            <Band $p={3} $h={26}>
              <Handle $m={6} />
              <Tool ic="arrow" t="选择" m={1} g={4} caret={7} />
              <Sep $m={7} />
              <Tool ic="line" t="直线" m={5} off />
              <Tool ic="arcg" t="三点画弧" off caret={7} />
              <BlankBox $m={5} $w={55}><Caret $off /></BlankBox>
              <Tool ic="rect" t="矩形" m={4} off />
              <Sep $m={9} />
              <Tool ic="single" t="单板" m={5} />
              <Tool ic="multi" t="多板" />
              <Tool ic="custom" t="自定义" m={7} caret={4} />
              <Tool ic="horiz" t="水平" m={7} />
              <Tool ic="vert" t="垂直" />
              <Tool ic="xy" t="XY方向" />
              <Tool ic="paredge" t="平行边布置受力筋" m={9} caret={6} />
              <Tool t="放射筋" m={9} caret={3} />
              <Tool ic="auto" t="自动配筋" m={7} />
              <Sep $m={9} />
              <Tool ic="swap" t="交换左右标注" m={4} />
              <Tool ic="viewb" t="查看布筋" m={5} g={7} caret={3} />
              <Chev m={29} />
            </Band>
            <Band $m={3} $p={13} $h={26}><Handle $m={2} /></Band>
          </ToolRow>
          <CanvasWrap>
            <Scene />
            <Panel>
              <PanelTitle>钢筋显示控制面板</PanelTitle>
              <PanelBody>
                {["面筋", "显示其它图元", "显示详细公式"].map(t => <PanelRow key={t}><Chk />{t}</PanelRow>)}
              </PanelBody>
            </Panel>
          </CanvasWrap>
          <ToolRow $h={28} $a="center">
            <Band $m={2} $p={3} $h={24}>
              <Handle />
              <Tool ic="ortho" t="正交" m={3} g={5} />
              <Tool ic="obj" t="对象捕捉" m={4} on />
              <Tool ic="dyn" t="动态输入" m={0} on />
            </Band>
            <Band $m={2} $p={6} $h={24}>
              <Handle />
              <Tool ic="cross" t="交点" m={4} />
              <Tool ic="perp" t="垂点" m={5} on />
              <Tool ic="mid" t="中点" m={1} on />
              <Tool ic="vertex" t="顶点" m={3} />
              <Tool ic="coord" t="坐标" />
            </Band>
          </ToolRow>
          <ToolRow $h={28} $a="center">
            <Band $m={450} $p={2} $h={25}>
              <Handle />
              <Combo $m={4} $w={62}><ComboText>不偏移</ComboText><ComboBtn><Caret $m={0} /></ComboBtn></Combo>
              <Sep $m={2} />
              <Unit $m={3}>X=</Unit>
              <NumBox $w={58} $m={3}>0<Spinner /></NumBox>
              <Unit>mm</Unit>
              <Unit $m={5}>Y=</Unit>
              <NumBox $w={58}>0<Spinner /></NumBox>
              <Unit $m={1}>mm</Unit>
              <Sep $m={4} />
              <Tick $m={3} />
              <Label $g={9}>旋转</Label>
              <NumBox $w={68} $m={5}>0.000<Spinner /></NumBox>
              <Unit $m={2}>°</Unit>
            </Band>
          </ToolRow>
        </Main>
      </Work>

      <StatusBar>
        <Cell $w={148}><Mono>X=387695 Y=16623</Mono></Cell>
        <Cell $w={79}>层高<Mono>:3.47m</Mono></Cell>
        <Cell $w={98}>底标高<Mono>:-3.5m</Mono></Cell>
        <Cell $w={48}><Mono>2(2)</Mono></Cell>
        <Cell $w={0} />
        <Cell $w={69}><Mono>158.6 FPS</Mono></Cell>
      </StatusBar>

      <Taskbar>
        <StartBtn><Win /></StartBtn>
        <Search>
          <svg width="20" height="20" viewBox="0 0 20 20"><circle cx="10" cy="10" r="8" fill="none" stroke="#fff" strokeWidth="1.800" /></svg>
          <SearchText>在这里输入你要搜索的内容</SearchText>
          <MicSvg viewBox="0 0 12 18"><rect x="3" y="1" width="6" height="10" rx="3" fill="none" stroke="#aaa" /><path d="M1 8a5 5 0 0 0 10 0M6 13v4M3 17h6" fill="none" stroke="#aaa" /></MicSvg>
        </Search>
        <Slot $w={49}><svg width="20" height="16" viewBox="0 0 20 16"><rect x="4.500" y=".5" width="11" height="15" fill="none" stroke="#fff" /><path d="M2 3H.5v10H2M18 3h1.500v10H18" fill="none" stroke="#fff" /></svg></Slot>
        <Slot $w={50}><svg width="22" height="22" viewBox="0 0 22 22"><g fill="#e8e8e8"><path d="M10 10C4 10 1 8 1 4s5-4 7-1 2 5 2 7z" /><path d="M12 10c0-6 2-9 6-9s4 5 1 7-5 2-7 2z" /><path d="M12 12c6 0 9 2 9 6s-5 4-7 1-2-5-2-7z" /><path d="M10 12c0 6-2 9-6 9s-4-5-1-7 5-2 7-2z" /></g></svg></Slot>
        <Slot $w={50}><svg width="28" height="24" viewBox="0 0 28 24"><path d="M10 18a6 6 0 1 1 4-10 4 4 0 1 0-2 6" fill="none" stroke="#ccc" strokeWidth="1.600" /><path d="M18 2c3 0 4 2 4 5l2 4H14l1-4c0-3 1-5 3-5z" fill="#f0a820" /></svg></Slot>
        <TaskDiv />
        <Slot><svg width="24" height="24" viewBox="0 0 24 24"><path d="M2 13C2 6 7 2 13 2c6 0 10 4 9 12H8c1 4 8 4 12 1v5c-6 3-18 2-18-7zM8 10h8c0-4-7-4-8 0z" fill="#0a78d8" /></svg></Slot>
        <Slot><svg width="22" height="24" viewBox="0 0 22 24"><path d="M7 6V4a4 4 0 0 1 8 0v2" fill="none" stroke="#ddd" /><rect x="1" y="6" width="20" height="17" fill="#f2f2f2" /><rect x="6" y="10" width="4.500" height="4.500" fill="#f25022" /><rect x="11.500" y="10" width="4.500" height="4.500" fill="#7fba00" /><rect x="6" y="15.500" width="4.500" height="4.500" fill="#00a4ef" /><rect x="11.500" y="15.500" width="4.500" height="4.500" fill="#ffb900" /></svg></Slot>
        <Slot><svg width="22" height="20" viewBox="0 0 22 20"><path d="M0 1h8l2 3h12v15H0z" fill="#f2c84a" /><path d="M0 6h22v7H0z" fill="#fbe29a" /><rect x="8" y="13" width="7" height="6" fill="#3aa6dc" /></svg></Slot>
        <Slot><svg width="24" height="24" viewBox="0 0 24 24"><ellipse cx="11" cy="13" rx="9" ry="9" fill="none" stroke="#2e90dc" strokeWidth="3" /><path d="M5 12h12" stroke="#2e90dc" strokeWidth="2.500" /><path d="M2 20C6 18 18 6 22 2" stroke="#f0b020" strokeWidth="1.600" fill="none" /></svg></Slot>
        <Slot $u><svg width="24" height="26" viewBox="0 0 24 26"><path d="M20 3C10 1 3 7 3 15c0 7 8 10 13 7 4-2 5-8 1-10s-7 1-6 4" fill="none" stroke="#1e9aee" strokeWidth="4.400" /></svg></Slot>
        <Slot $u><svg width="24" height="26" viewBox="0 0 24 26"><circle cx="12" cy="13" r="10" fill="#a8d84a" /><circle cx="12" cy="13" r="8" fill="#fff" /><path d="M6 12h12M8 9c3-3 8-2 9 2M7 16c3 3 7 3 10 0" stroke="#5cae2e" strokeWidth="1.600" fill="none" /></svg></Slot>
        <Slot $u><svg width="24" height="24" viewBox="0 0 24 24"><rect x="1" y="1" width="22" height="22" rx="2" fill="#f8a820" /><rect x="3" y="4" width="18" height="17" fill="#fbe2a0" /><path d="M6 9h10M6 13h10M6 17h6" stroke="#b88a30" /><path d="M21 3l-7 12" stroke="#c83818" strokeWidth="2" /></svg></Slot>
        <Slot $u><svg width="22" height="24" viewBox="0 0 22 24"><rect x="3" y="8" width="9" height="15" fill="#ddd" /><path d="M5 12h5M5 15h5M5 18h5" stroke="#555" /><path d="M12 5c1-4 8-4 8 1 0 3-4 3-4 6" fill="none" stroke="#ffd800" strokeWidth="3" /><rect x="14.500" y="14" width="3" height="3" fill="#ffd800" /></svg></Slot>
        <Slot $u $act><Logo s={24} /></Slot>
        <Cpu>49%<br />CPU使用</Cpu>
        <Tray>
          <svg width="24" height="12" viewBox="0 0 24 12"><path d="M6 9l6-6 6 6" fill="none" stroke="#fff" strokeWidth="1.400" /></svg>
          <svg width="26" height="14" viewBox="0 0 26 14"><rect x="8" y="3" width="13" height="9" fill="none" stroke="#fff" /><rect x="9" y="4" width="8" height="7" fill="#fff" /><path d="M4 1v5M7 1v5M3 6h5v2H6v3" stroke="#fff" fill="none" /></svg>
          <svg width="24" height="16" viewBox="0 0 24 16"><path d="M7 14a2 2 0 0 1 2-2M5 12a5 5 0 0 1 6-6M3 9a8 8 0 0 1 10-5M1 7a11 11 0 0 1 14-6" fill="none" stroke="#ccc" /><circle cx="10" cy="13" r="1.300" fill="#fff" /></svg>
          <svg width="22" height="16" viewBox="0 0 22 16"><path d="M3 6h3l4-4v12l-4-4H3z" fill="none" stroke="#fff" /><path d="M13 5c1 2 1 4 0 6M15 3c2 3 2 7 0 10" fill="none" stroke="#ccc" /></svg>
          <KbSvg viewBox="0 0 30 14"><rect x=".5" y=".5" width="23" height="13" fill="none" stroke="#fff" /><path d="M3 4h18M3 7h18M6 10h12" stroke="#fff" strokeDasharray="1 1" /></KbSvg>
          <TrayA>A</TrayA>
          <SoSvg viewBox="0 0 18 18"><path d="M3 2l13-1 0 13-13 3z" fill="#f0481a" /><path d="M12 5H7v4h4v4H6" fill="none" stroke="#fff" strokeWidth="1.800" /></SoSvg>
        </Tray>
        <Clock>20:58<br />2017/10/30</Clock>
        <Slot $w={40}><svg width="26" height="28" viewBox="0 0 26 28"><path d="M2 3h16v12h-7l-3 3v-3H2z" fill="#fff" /><path d="M5 6h10M5 9h10M5 12h6" stroke="#222" /><circle cx="17" cy="20" r="7" fill="#2a2a2a" stroke="#999" /><text x="17" y="24" textAnchor="middle" fontFamily="Liberation Sans" fontWeight="bold" fontSize="11" fill="#fff">2</text></svg></Slot>
      </Taskbar>

      <Sogou>
        <SoLogo viewBox="0 0 20 26"><path d="M2 4l17-3 0 20-17 4z" fill="#f0501a" /><path d="M14 8H7v5h6v6H6" fill="none" stroke="#fff" strokeWidth="2.600" /></SoLogo>
        <SogouIcon $m={9} viewBox="0 0 16 18"><path d="M1 17L7 2h2l6 15M4 12h8" fill="none" stroke="#1a70c8" strokeWidth="2" /></SogouIcon>
        <SogouIcon $m={8} viewBox="0 0 16 18"><circle cx="3" cy="7" r="1.500" fill="#1a70c8" /><path d="M8 4c2 2 2 5-1 8" fill="none" stroke="#1a70c8" strokeWidth="2" /></SogouIcon>
        <SogouIcon $m={4} viewBox="0 0 16 18"><rect x="5" y="1" width="6" height="10" rx="3" fill="#1a70c8" /><path d="M3 8a5 5 0 0 0 10 0M8 13v4M5 17h6" fill="none" stroke="#1a70c8" strokeWidth="1.500" /></SogouIcon>
        <SogouIcon $m={7} viewBox="0 0 16 18"><rect x="0" y="4" width="16" height="11" rx="2" fill="#1a70c8" /><path d="M2 7h12M2 10h12M4 13h8" stroke="#fff" strokeDasharray="1.500 1" /></SogouIcon>
        <SogouIcon $m={8} viewBox="0 0 16 18"><circle cx="6" cy="5" r="3.500" fill="#b8c4d0" /><path d="M0 16c0-5 3-6 6-6s6 1 6 6z" fill="#b8c4d0" /><rect x="10" y="10" width="6" height="6" fill="#fff" stroke="#a0b0c0" /></SogouIcon>
        <SogouIcon $m={4} viewBox="0 0 16 18"><path d="M5 2L0 5l2 4 2-1v8h8V8l2 1 2-4-5-3c-1 2-5 2-6 0z" fill="#1a70c8" /></SogouIcon>
        <SogouIcon $m={6} viewBox="0 0 16 18"><path d="M3 16l7-8c-1-3 1-6 5-6l-3 3 1 2 2 1 1-3c1 4-2 7-5 6l-6 7z" fill="#1a70c8" stroke="#1a70c8" /></SogouIcon>
      </Sogou>
      <Badge>70</Badge>
    </Frame>
  );
}
